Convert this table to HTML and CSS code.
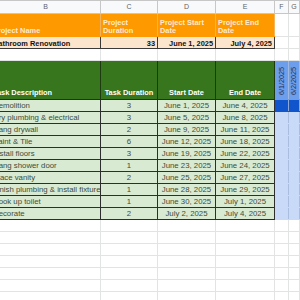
FILE: index.html
```html
<!DOCTYPE html>
<html>
<head>
<meta charset="utf-8">
<link rel="stylesheet" href="styles.css">
</head>
<body>
<div class="sheet">
<table class="grid">
  <colgroup>
    <col class="cb"><col class="cc"><col class="cd"><col class="ce"><col class="cf"><col class="cg"><col class="ch">
  </colgroup>
  <tr class="r-head">
    <td class="colhdr">B</td><td class="colhdr">C</td><td class="colhdr">D</td><td class="colhdr">E</td><td class="colhdr">F</td><td class="colhdr">G</td><td class="colhdr"></td>
  </tr>
  <tr class="r-proj-h">
    <td class="orange">Project Name</td>
    <td class="orange">Project<br>Duration</td>
    <td class="orange">Project Start<br>Date</td>
    <td class="orange">Project End<br>Date</td>
    <td></td><td></td><td></td>
  </tr>
  <tr class="r-row">
    <td class="peach">Bathroom Renovation</td>
    <td class="peach num">33</td>
    <td class="peach num">June 1, 2025</td>
    <td class="peach num">July 4, 2025</td>
    <td></td><td></td><td></td>
  </tr>
  <tr class="r-row"><td></td><td></td><td></td><td></td><td></td><td></td><td></td></tr>
  <tr class="r-task-h">
    <td class="green">Task Description</td>
    <td class="green mid">Task Duration</td>
    <td class="green mid">Start Date</td>
    <td class="green mid">End Date</td>
    <td class="bluehdr"><span class="rot">6/1/2025</span></td>
    <td class="bluehdr"><span class="rot">6/2/2025</span></td>
    <td></td>
  </tr>
  <tr class="r-row"><td class="task">Demolition</td><td class="task mid">3</td><td class="task mid">June 1, 2025</td><td class="task mid">June 4, 2025</td><td class="bdark"></td><td class="bdark"></td><td></td></tr>
  <tr class="r-row"><td class="task">Dry plumbing &amp; electrical</td><td class="task mid">3</td><td class="task mid">June 5, 2025</td><td class="task mid">June 8, 2025</td><td class="blight"></td><td class="blight"></td><td></td></tr>
  <tr class="r-row"><td class="task">Hang drywall</td><td class="task mid">2</td><td class="task mid">June 9, 2025</td><td class="task mid">June 11, 2025</td><td class="blight"></td><td class="blight"></td><td></td></tr>
  <tr class="r-row"><td class="task">Paint &amp; Tile</td><td class="task mid">6</td><td class="task mid">June 12, 2025</td><td class="task mid">June 18, 2025</td><td class="blight"></td><td class="blight"></td><td></td></tr>
  <tr class="r-row"><td class="task">Install floors</td><td class="task mid">3</td><td class="task mid">June 19, 2025</td><td class="task mid">June 22, 2025</td><td class="blight"></td><td class="blight"></td><td></td></tr>
  <tr class="r-row"><td class="task">Hang shower door</td><td class="task mid">1</td><td class="task mid">June 23, 2025</td><td class="task mid">June 24, 2025</td><td class="blight"></td><td class="blight"></td><td></td></tr>
  <tr class="r-row"><td class="task">Place vanity</td><td class="task mid">2</td><td class="task mid">June 25, 2025</td><td class="task mid">June 27, 2025</td><td class="blight"></td><td class="blight"></td><td></td></tr>
  <tr class="r-row"><td class="task">Finish plumbing &amp; install fixtures</td><td class="task mid">1</td><td class="task mid">June 28, 2025</td><td class="task mid">June 29, 2025</td><td class="blight"></td><td class="blight"></td><td></td></tr>
  <tr class="r-row"><td class="task">Hook up toilet</td><td class="task mid">1</td><td class="task mid">June 30, 2025</td><td class="task mid">July 1, 2025</td><td class="blight"></td><td class="blight"></td><td></td></tr>
  <tr class="r-row"><td class="task">Decorate</td><td class="task mid">2</td><td class="task mid">July 2, 2025</td><td class="task mid">July 4, 2025</td><td class="blight"></td><td class="blight"></td><td></td></tr>
  <tr class="r-row"><td></td><td></td><td></td><td></td><td></td><td></td><td></td></tr>
  <tr class="r-row"><td></td><td></td><td></td><td></td><td></td><td></td><td></td></tr>
  <tr class="r-row"><td></td><td></td><td></td><td></td><td></td><td></td><td></td></tr>
  <tr class="r-row"><td></td><td></td><td></td><td></td><td></td><td></td><td></td></tr>
  <tr class="r-row"><td></td><td></td><td></td><td></td><td></td><td></td><td></td></tr>
  <tr class="r-row"><td></td><td></td><td></td><td></td><td></td><td></td><td></td></tr>
  <tr class="r-row"><td></td><td></td><td></td><td></td><td></td><td></td><td></td></tr>
</table>
</div>
</body>
</html>
```

FILE: styles.css
```css
html, body {
  margin: 0;
  padding: 0;
  background: #ffffff;
  overflow: hidden;
}
.sheet {
  width: 300px;
  height: 300px;
  overflow: hidden;
}
.grid {
  margin-left: -10px;
  border-collapse: collapse;
  table-layout: fixed;
  width: 340px;
  font-family: "Liberation Sans", Arial, sans-serif;
  font-size: 7.4px;
}
.cb { width: 110px; }
.cc { width: 57px; }
.cd { width: 58px; }
.ce { width: 59px; }
.cf { width: 14px; }
.cg { width: 11px; }
.ch { width: 31px; }
.grid td {
  border: 1px solid #e2e3e3;
  padding: 0 2px;
  white-space: nowrap;
  overflow: hidden;
  line-height: 8px;
  vertical-align: bottom;
}
.r-head td { height: 12px; }
.r-proj-h td { height: 21px; }
.r-row td { height: 11px; }
.r-task-h td { height: 36px; }
.grid td.colhdr {
  background: #f8f9fa;
  color: #5f6368;
  text-align: center;
  vertical-align: middle;
  border-color: #c7c7c7;
  font-size: 7px;
}
.grid td.orange {
  background: #ff9900;
  color: #fdebcf;
  font-weight: bold;
  border-color: #ff9900;
  border-right-color: #f2b35c;
  padding-bottom: 1px;
}
.grid td.peach {
  background: #fce5cd;
  color: #111111;
  font-weight: bold;
  border-color: #3a3a3a;
}
.grid td.num { text-align: right; }
.grid td.green {
  background: #38761d;
  color: #ffffff;
  font-weight: bold;
  border-color: #38761d;
  border-right-color: #1d3a10;
  border-bottom-color: #2b2b2b;
  padding-bottom: 2px;
}
.grid td.mid { text-align: center; }
.grid td.task {
  background: #d9ead3;
  color: #3e4c37;
  border-color: #2e2e2e;
  font-size: 7.8px;
  vertical-align: middle;
}
.grid td.bluehdr {
  background: #6d9eeb;
  border-color: #6d9eeb;
  border-right-color: #9fb9e3;
  padding: 0;
  text-align: center;
  vertical-align: bottom;
  color: #1d2f52;
}
.rot {
  display: inline-block;
  writing-mode: vertical-rl;
  transform: rotate(180deg);
  font-size: 7.2px;
  line-height: 8px;
  padding-top: 2px;
}
.grid td.bdark {
  background: #1155cc;
  border-color: #1155cc;
  border-right-color: #8fa9d6;
}
.grid td.blight {
  background: #c9daf8;
  border-color: #c9daf8;
  border-right-color: #a9bde0;
}
```
